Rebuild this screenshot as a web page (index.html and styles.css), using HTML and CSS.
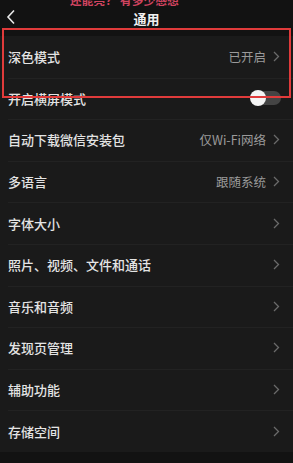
FILE: index.html
```html
<!DOCTYPE html>
<html lang="zh">
<head>
<meta charset="utf-8">
<link rel="stylesheet" href="styles.css">
</head>
<body>
<div class="page">
  <div class="caption"><span>还能亮？ 有多少感想</span></div>
  <header class="header">
    <svg class="back" width="10" height="16" viewBox="0 0 10 16"><path d="M8 1.5 L2 8 L8 14.5" fill="none" stroke="#e8e8e8" stroke-width="1.6"/></svg>
    <div class="title">通用</div>
  </header>
  <ul class="list">
    <li class="row"><span class="label">深色模式</span><span class="value">已开启</span><svg class="chev" width="7" height="11" viewBox="0 0 7 11"><path d="M1 1 L5.5 5.5 L1 10" fill="none" stroke="#6a6a6a" stroke-width="1.3"/></svg></li>
    <li class="row"><span class="label">开启横屏模式</span><span class="toggle"><span class="knob"></span></span></li>
    <li class="row"><span class="label">自动下载微信安装包</span><span class="value">仅Wi-Fi网络</span><svg class="chev" width="7" height="11" viewBox="0 0 7 11"><path d="M1 1 L5.5 5.5 L1 10" fill="none" stroke="#6a6a6a" stroke-width="1.3"/></svg></li>
    <li class="row"><span class="label">多语言</span><span class="value">跟随系统</span><svg class="chev" width="7" height="11" viewBox="0 0 7 11"><path d="M1 1 L5.5 5.5 L1 10" fill="none" stroke="#6a6a6a" stroke-width="1.3"/></svg></li>
    <li class="row"><span class="label">字体大小</span><svg class="chev" width="7" height="11" viewBox="0 0 7 11"><path d="M1 1 L5.5 5.5 L1 10" fill="none" stroke="#6a6a6a" stroke-width="1.3"/></svg></li>
    <li class="row"><span class="label">照片、视频、文件和通话</span><svg class="chev" width="7" height="11" viewBox="0 0 7 11"><path d="M1 1 L5.5 5.5 L1 10" fill="none" stroke="#6a6a6a" stroke-width="1.3"/></svg></li>
    <li class="row"><span class="label">音乐和音频</span><svg class="chev" width="7" height="11" viewBox="0 0 7 11"><path d="M1 1 L5.5 5.5 L1 10" fill="none" stroke="#6a6a6a" stroke-width="1.3"/></svg></li>
    <li class="row"><span class="label">发现页管理</span><svg class="chev" width="7" height="11" viewBox="0 0 7 11"><path d="M1 1 L5.5 5.5 L1 10" fill="none" stroke="#6a6a6a" stroke-width="1.3"/></svg></li>
    <li class="row"><span class="label">辅助功能</span><svg class="chev" width="7" height="11" viewBox="0 0 7 11"><path d="M1 1 L5.5 5.5 L1 10" fill="none" stroke="#6a6a6a" stroke-width="1.3"/></svg></li>
    <li class="row"><span class="label">存储空间</span><svg class="chev" width="7" height="11" viewBox="0 0 7 11"><path d="M1 1 L5.5 5.5 L1 10" fill="none" stroke="#6a6a6a" stroke-width="1.3"/></svg></li>
  </ul>
  <div class="highlight"></div>
</div>
</body>
</html>
```
FILE: styles.css
```css
html, body {
  margin: 0;
  padding: 0;
  background: #121212;
}
body {
  font-family: "Noto Sans CJK SC", "Noto Sans", sans-serif;
  width: 293px;
  height: 463px;
  overflow: hidden;
}
.page {
  position: relative;
  width: 293px;
  height: 463px;
  background: #121212;
}
.caption {
  height: 6px;
  overflow: hidden;
  position: absolute;
  top: 0;
  left: 0;
  width: 293px;
  z-index: 2;
}
.caption span {
  display: block;
  position: absolute;
  left: 70px;
  top: -6px;
  font-size: 11.5px;
  line-height: 13px;
  font-weight: 700;
  color: #d04460;
  letter-spacing: 0.3px;
  white-space: nowrap;
}
.header {
  height: 36px;
  display: flex;
  align-items: center;
  justify-content: center;
  position: relative;
  background: #121212;
}
.back {
  position: absolute;
  left: 6px;
  top: 9px;
}
.title {
  color: #f0f0f0;
  font-size: 13px;
  font-weight: 700;
}
.list {
  list-style: none;
  margin: 0;
  padding: 0;
  background: #1a1a1a;
}
.row {
  height: 41.6px;
  box-sizing: border-box;
  display: flex;
  align-items: center;
  padding: 0 13px 0 8px;
  position: relative;
}
.row + .row::before {
  content: "";
  position: absolute;
  left: 8px;
  right: 0;
  top: 0;
  height: 1px;
  background: #222222;
}
.label {
  flex: 1;
  color: #e4e4e4;
  font-size: 13px;
  font-weight: 500;
}
.value {
  color: #9a9a9a;
  font-size: 12.5px;
  margin-right: 7px;
}
.chev {
  display: block;
}
.toggle {
  width: 30px;
  height: 14px;
  border-radius: 7px;
  background: #444;
  position: relative;
  margin-right: -1px;
}
.knob {
  position: absolute;
  left: -1px;
  top: -1px;
  width: 16px;
  height: 16px;
  border-radius: 50%;
  background: #f4f4f4;
}
.highlight {
  position: absolute;
  left: 2px;
  top: 28px;
  width: 285px;
  height: 66px;
  border: 2px solid #e03b3b;
  pointer-events: none;
}
```
